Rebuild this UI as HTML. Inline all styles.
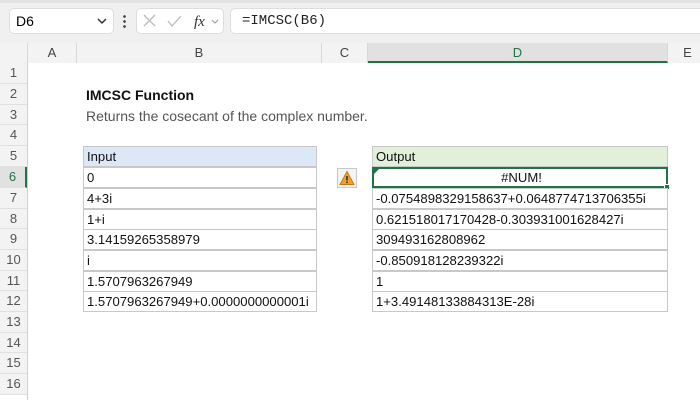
<!DOCTYPE html>
<html><head><style>
*{margin:0;padding:0;box-sizing:border-box}
body{width:700px;height:400px;overflow:hidden;background:#fff;font-family:"Liberation Sans",sans-serif;position:relative}
.a{position:absolute}
.rh{position:absolute;left:0;width:27px;text-align:center;font-size:13px;color:#555;background:#f3f3f3;border-bottom:1px solid #e0e0e0;line-height:20px}
.ch{position:absolute;top:43px;height:20px;text-align:center;font-size:13px;color:#444;line-height:20px;border-right:1px solid #d8d8d8;background:#f3f3f3}
.c{position:absolute;height:21px;border:1px solid #c8c8c8;font-size:13.1px;line-height:19px;padding-left:3px;color:#111;background:#fff;white-space:nowrap;overflow:hidden}
</style></head><body>
<div class="a" style="left:0;top:0;width:700px;height:43px;background:#f0f0f0;border-top:3px solid #e2e2e2"></div>
<div class="a" style="left:9px;top:8px;width:105px;height:26px;background:#fff;border:1px solid #ddd;border-radius:5px;font-size:14px;line-height:24px;padding-left:6px">D6</div>
<svg class="a" style="left:96px;top:16px" width="12" height="10"><path d="M2 3l4 4 4-4" stroke="#333" stroke-width="1.5" fill="none"/></svg>
<div class="a" style="left:123px;top:14px;width:3px;height:14px;background:radial-gradient(circle,#444 1.2px,transparent 1.5px) 0 0/3px 5px"></div>
<div class="a" style="left:136px;top:8px;width:88px;height:26px;background:#fff;border:1px solid #ddd;border-radius:5px"></div>
<svg class="a" style="left:142px;top:13px" width="80" height="16"><path d="M2 2l11 11M13 2L2 13" stroke="#bbb" stroke-width="1.3"/><path d="M26 8l4 5 9-10" stroke="#bbb" stroke-width="1.3" fill="none"/><text x="52" y="13" font-family="Liberation Serif" font-style="italic" font-size="15" fill="#333">fx</text><path d="M70 7l3 3 3-3" stroke="#999" fill="none"/></svg>
<div class="a" style="left:230px;top:8px;width:480px;height:26px;background:#fff;border:1px solid #ddd;border-radius:5px;font-family:'Liberation Mono',monospace;font-size:14px;line-height:24px;padding-left:11px;color:#222">=IMCSC(B6)</div>
<div class="a" style="left:0;top:43px;width:700px;height:20px;background:#f3f3f3;border-bottom:1px solid #d0d0d0"></div>
<svg class="a" style="left:12px;top:48px" width="14" height="14"><path d="M13 1V13H1Z" fill="#d0d0d0"/></svg>
<div class="ch" style="left:0;width:28px"></div>
<div class="ch" style="left:28px;width:49px">A</div>
<div class="ch" style="left:77px;width:245px">B</div>
<div class="ch" style="left:322px;width:46px">C</div>
<div class="ch" style="left:368px;width:300px;background:#e1e1e1;color:#217346;border-bottom:2px solid #217346">D</div>
<div class="ch" style="left:668px;width:40px">E</div>
<div class="a" style="left:27px;top:63px;width:1px;height:337px;background:#d0d0d0"></div>
<div class="rh" style="top:63px;height:21px">1</div>
<div class="rh" style="top:84px;height:21px">2</div>
<div class="rh" style="top:105px;height:20px">3</div>
<div class="rh" style="top:125px;height:21px">4</div>
<div class="rh" style="top:146px;height:21px">5</div>
<div class="rh" style="top:167px;height:21px;background:#e1e1e1;color:#217346;border-right:2px solid #217346">6</div>
<div class="rh" style="top:188px;height:21px">7</div>
<div class="rh" style="top:209px;height:20px">8</div>
<div class="rh" style="top:229px;height:21px">9</div>
<div class="rh" style="top:250px;height:21px">10</div>
<div class="rh" style="top:271px;height:20px">11</div>
<div class="rh" style="top:291px;height:21px">12</div>
<div class="rh" style="top:312px;height:21px">13</div>
<div class="rh" style="top:333px;height:20px">14</div>
<div class="rh" style="top:353px;height:21px">15</div>
<div class="rh" style="top:374px;height:21px">16</div>
<div class="a" style="left:86px;top:87px;font-size:14px;font-weight:bold;color:#111">IMCSC Function</div>
<div class="a" style="left:86px;top:108px;font-size:14px;color:#555">Returns the cosecant of the complex number.</div>
<div class="c" style="left:83px;top:146px;width:234px;background:#dde8f6">Input</div>
<div class="c" style="left:83px;top:167px;width:234px">0</div>
<div class="c" style="left:83px;top:188px;width:234px">4+3i</div>
<div class="c" style="left:83px;top:209px;width:234px">1+i</div>
<div class="c" style="left:83px;top:229px;width:234px">3.14159265358979</div>
<div class="c" style="left:83px;top:250px;width:234px">i</div>
<div class="c" style="left:83px;top:271px;width:234px">1.5707963267949</div>
<div class="c" style="left:83px;top:291px;width:234px">1.5707963267949+0.0000000000001i</div>
<div class="c" style="left:372px;top:146px;width:296px;background:#e2f0d9">Output</div>
<div class="c" style="left:372px;top:167px;width:296px;text-align:center;border:2px solid #217346;line-height:17px">#NUM!</div>
<svg class="a" style="left:374px;top:169px" width="5" height="5"><path d="M0 0H5L0 5Z" fill="#217346"/></svg>
<div class="a" style="left:664px;top:184px;width:6px;height:6px;background:#217346;border:1px solid #fff"></div>
<div class="c" style="left:372px;top:188px;width:296px">-0.0754898329158637+0.0648774713706355i</div>
<div class="c" style="left:372px;top:209px;width:296px">0.621518017170428-0.303931001628427i</div>
<div class="c" style="left:372px;top:229px;width:296px">309493162808962</div>
<div class="c" style="left:372px;top:250px;width:296px">-0.850918128239322i</div>
<div class="c" style="left:372px;top:271px;width:296px">1</div>
<div class="c" style="left:372px;top:291px;width:296px">1+3.49148133884313E-28i</div>
<div class="a" style="left:337px;top:168px;width:20px;height:20px;border:1px solid #c8c8c8;background:#f4f4f4"></div>
<svg class="a" style="left:339px;top:170px" width="16" height="16"><path d="M8 1.5L15 14.5H1Z" fill="#f0a030" stroke="#c77a10"/><path d="M8 6v4.5" stroke="#333" stroke-width="1.6"/><circle cx="8" cy="12.3" r="0.9" fill="#333"/></svg>
</body></html>
